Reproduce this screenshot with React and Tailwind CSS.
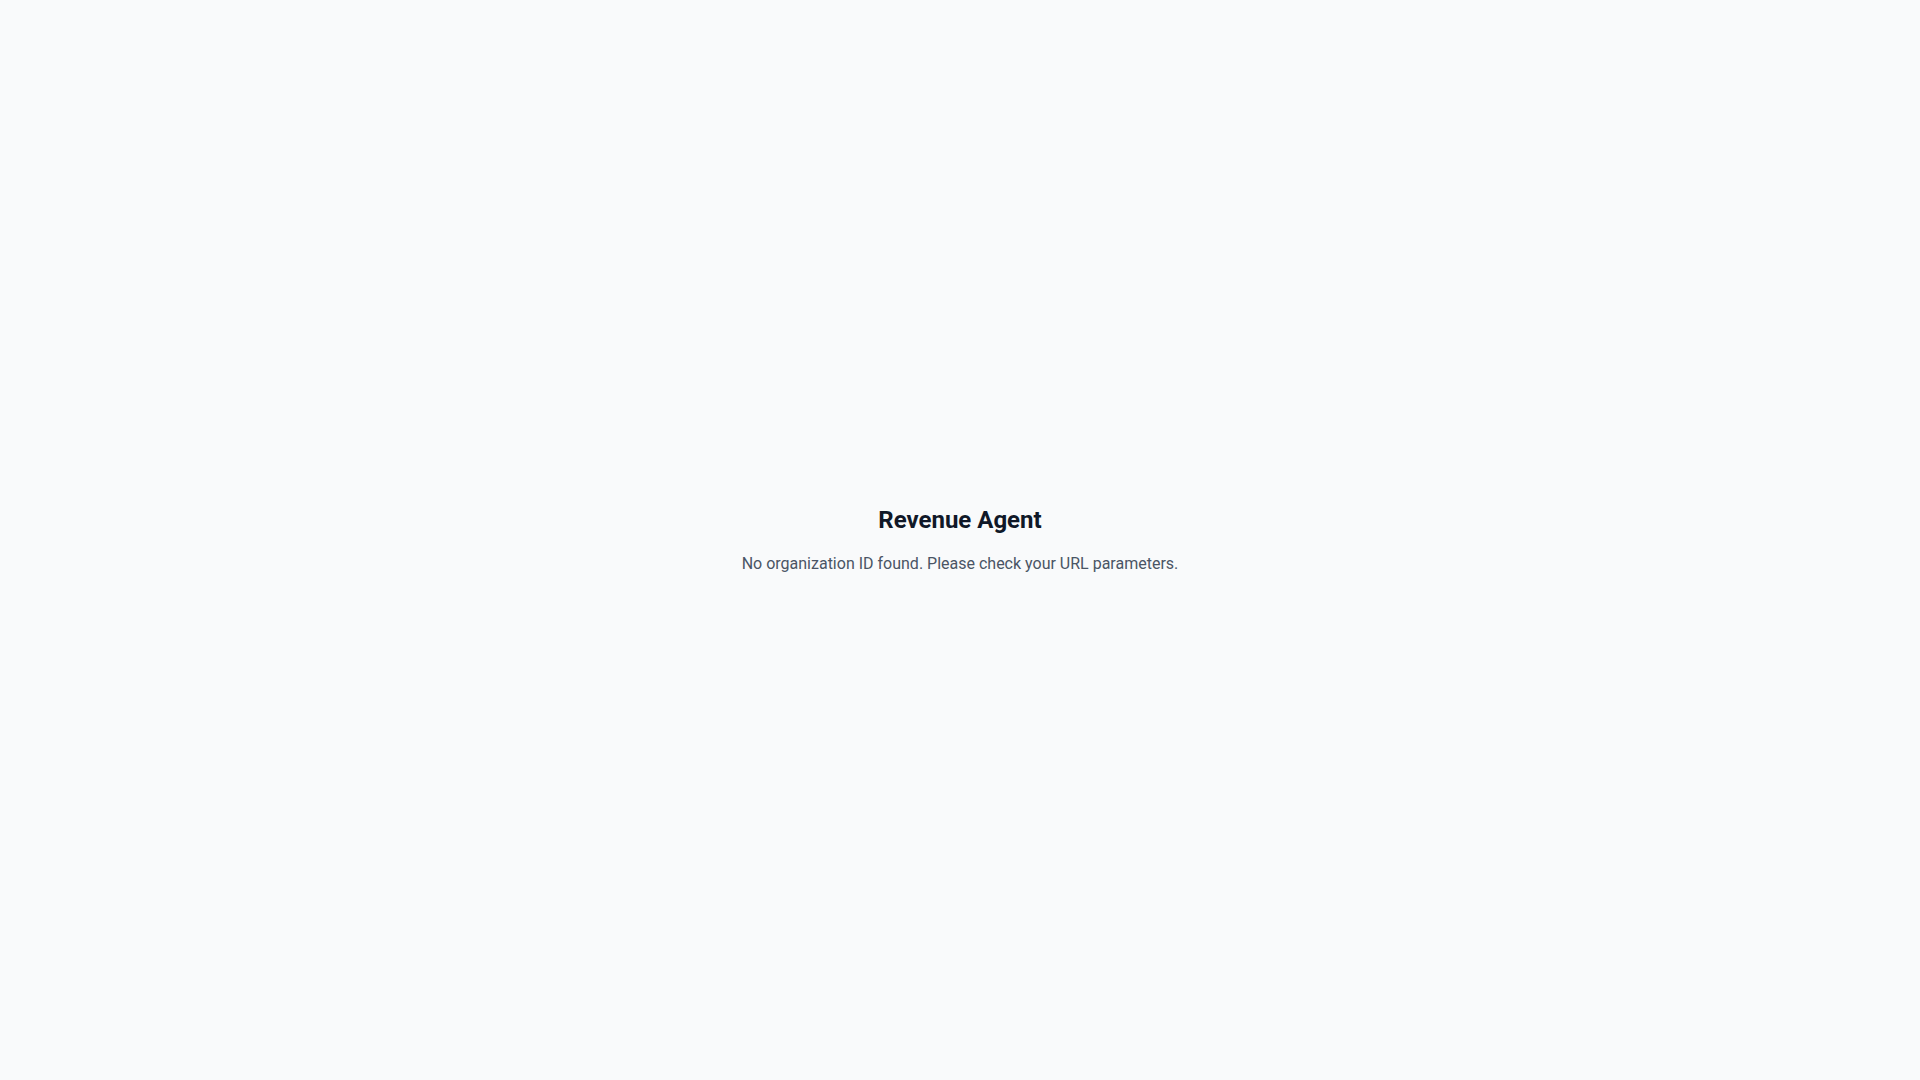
export default function App() {
  return (
    <div className="min-h-screen bg-gray-50 flex items-center justify-center font-[Roboto,sans-serif]">
      <div className="text-center">
        <h1 className="text-2xl font-bold text-gray-900 mb-4">Revenue Agent</h1>
        <p className="text-gray-600">No organization ID found. Please check your URL parameters.</p>
      </div>
    </div>
  );
}
